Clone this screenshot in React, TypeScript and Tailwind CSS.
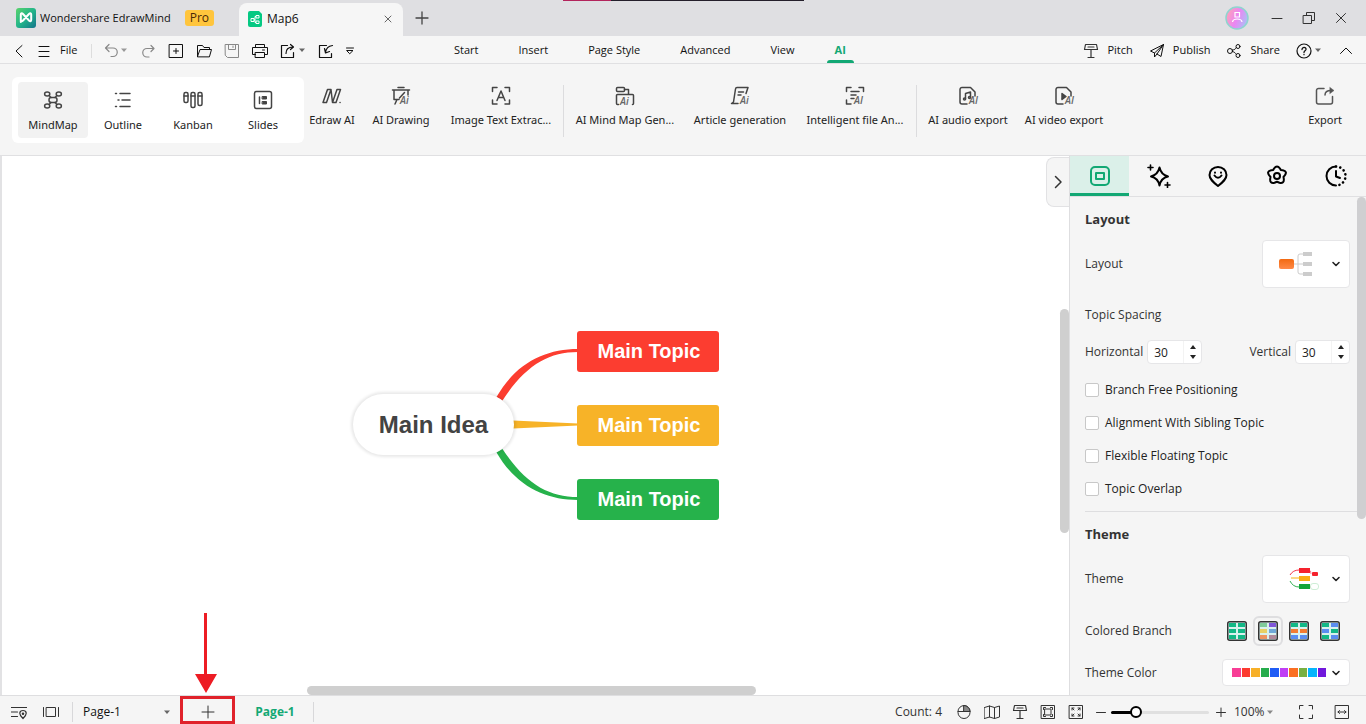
import React, { useState } from 'react';

type IconProps = {
  children: React.ReactNode;
  size?: number;
  stroke?: number;
  className?: string;
};

// every icon is drawn on a grid of its own pixel size
const Icon = ({ children, size = 16, stroke = 1, className = '' }: IconProps) => (
  <svg
    width={size}
    height={size}
    viewBox={`0 0 ${size} ${size}`}
    fill="none"
    stroke="currentColor"
    strokeWidth={stroke}
    strokeLinecap="round"
    strokeLinejoin="round"
    aria-hidden="true"
    className={`shrink-0 ${className}`}
  >
    {children}
  </svg>
);

const Caret = ({ className = 'text-[#666]' }: { className?: string }) => (
  <svg width="8" height="5" viewBox="0 0 8 5" aria-hidden="true" className={`shrink-0 ${className}`}>
    <path d="M1 0.500h6L4 4z" fill="currentColor" />
  </svg>
);

const AiMark = ({ x, y, label = 'Ai' }: { x: number; y: number; label?: string }) => (
  <text
    x={x}
    y={y}
    fontSize="10"
    fontStyle="italic"
    fontWeight="600"
    fontFamily="Open Sans, sans-serif"
    fill="#666"
    stroke="none"
  >
    {label}
  </text>
);

const PitchIcon = () => (
  <Icon>
    <path d="M2.500 1.500h11l1 5h-13zM5 4h6M8 6.500v8M5 14.500h6" stroke="#333" strokeWidth="1.200" />
  </Icon>
);

const TitleBar = () => (
  <header className="relative flex h-9 shrink-0 items-center bg-[#dfdfe2]">
    <div className="flex w-[239px] shrink-0 items-center pl-4">
      <svg width="20" height="20" viewBox="0 0 20 20" aria-hidden="true">
        <defs>
          <linearGradient id="logo" x1="0" y1="0" x2="1" y2="1">
            <stop offset="0" stopColor="#5ad36b" />
            <stop offset="0.5" stopColor="#22b58a" />
            <stop offset="1" stopColor="#14748c" />
          </linearGradient>
        </defs>
        <rect width="20" height="20" rx="3" fill="url(#logo)" />
        <path d="M4.800 14V6.500C4.800 5 6 5 7 6l6 6.500c1 1 2.200 1 2.200-.5V6.500C15.200 5 14 5 13 6l-6 6.500c-1 1-2.200 1-2.200-.500z" fill="none" stroke="#fff" strokeWidth="2" strokeLinejoin="round" />
      </svg>
      <span className="ml-1 text-[11px]">Wondershare EdrawMind</span>
      <span className="ml-3.5 flex h-4 items-center rounded-[3px] bg-[#ffc53d] px-[5px] text-[12px] text-[#4a2a08]">Pro</span>
    </div>
    <div className="mt-[3px] flex h-[33px] w-[164px] shrink-0 items-center rounded-t-lg bg-[#f6f6f6] pr-2.5 pb-0.5 pl-[9px]">
      <svg width="14" height="16" viewBox="0 0 14 16" aria-hidden="true">
        <path d="M2 0h9l3 3v11a2 2 0 0 1-2 2H2a2 2 0 0 1-2-2V2a2 2 0 0 1 2-2z" fill="#05c983" />
        <path d="M3 7.500h3v3H3zM8 4.500h3v2.500H8zM8 10h3v2.500H8zM6 9h1M7 5.500v6M7 5.500h1M7 11.500h1" fill="none" stroke="#fff" />
      </svg>
      <span className="ml-[5px] text-[12px]">Map6</span>
      <button type="button" aria-label="Close tab" className="ml-auto text-[#666]">
        <Icon size={10}><path d="M2 2l6 6M8 2l-6 6" /></Icon>
      </button>
    </div>
    <button type="button" aria-label="New tab" className="ml-3 text-[#444]">
      <Icon size={14}><path d="M7 1v12M1 7h12" strokeWidth="1.300" /></Icon>
    </button>
    <div className="mr-[17px] ml-auto flex items-center gap-4 text-[#333]">
      <button type="button" aria-label="Account" className="mr-1">
        <svg width="24" height="24" viewBox="0 0 24 24">
          <defs>
            <linearGradient id="avatar" x1="0" y1="0.300" x2="1" y2="0.700">
              <stop offset="0" stopColor="#ffa3b8" />
              <stop offset="0.500" stopColor="#ea86f3" />
              <stop offset="1" stopColor="#a6c4f6" />
            </linearGradient>
          </defs>
          <circle cx="12" cy="12" r="11" fill="url(#avatar)" stroke="#8fd4cf" strokeWidth="1.500" />
          <path d="M10 6.500h4.500v4.500H10zM7.500 16c.5-4 9-4 9.500 0" fill="none" stroke="#fff" strokeWidth="1.200" />
        </svg>
      </button>
      <button type="button" aria-label="Minimize"><Icon><path d="M3 8.500h10" /></Icon></button>
      <button type="button" aria-label="Restore">
        <Icon><path d="M2.500 5.500h8v8h-8zM5.500 5.500v-3h8v8h-3" /></Icon>
      </button>
      <button type="button" aria-label="Close window"><Icon><path d="M3.500 3.500l9 9M12.500 3.500l-9 9" /></Icon></button>
    </div>
    <div className="absolute top-0 left-[563px] flex h-px w-[241px]">
      <div className="w-12 bg-[#b3245c]" />
      <div className="flex-1 bg-[#241f2b]" />
    </div>
  </header>
);

const MENU_TABS = ['Start', 'Insert', 'Page Style', 'Advanced', 'View', 'AI'];

const MenuBar = () => {
  const [active, setActive] = useState('AI');

  return (
    <div className="flex h-7 shrink-0 items-center border-b border-[#e0e0e2] bg-[#f6f6f6] pt-0.5 text-[11px] text-[#111]">
      <div className="flex w-[434px] shrink-0 items-center pl-3">
        <button type="button" aria-label="Back"><Icon><path d="M10 2.500L4 8l6 6" /></Icon></button>
        <button type="button" className="ml-2 flex items-center gap-2">
          <Icon><path d="M3 3.500h10M3 8.500h10M3 13.500h10" /></Icon>
          File
        </button>
        <span className="mr-3 ml-3.5 h-3.5 w-px bg-[#ddd]" />
        <button type="button" aria-label="Undo" className="flex items-center text-[#888]">
          <Icon><path d="M5 1.500L1.500 5 5 8.500M1.500 5H9a4 4 0 0 1 0 8.500H7" strokeWidth="1.200" /></Icon>
          <Caret className="text-[#999]" />
        </button>
        <button type="button" aria-label="Redo" className="ml-3 text-[#888]">
          <Icon><path d="M11 2.500L14 5.500 11 8.500M14 5.500H7a4 4 0 0 0 0 8.500h2" strokeWidth="1.200" /></Icon>
        </button>
        <button type="button" aria-label="New" className="ml-3">
          <Icon><path d="M1.500 1.500h13v13h-13zM8 5.500v5M5.500 8h5" /></Icon>
        </button>
        <button type="button" aria-label="Open" className="ml-3">
          <Icon><path d="M1.500 13.500v-11h5l1.500 2h5.500v2M1.500 13.500l2.500-7h11.500l-2 7z" /></Icon>
        </button>
        <button type="button" aria-label="Save" className="ml-3 text-[#888]">
          <Icon><path d="M1.500 1.500h13v13h-11l-2-2zM4.500 1.500v5h7v-5M9 3v1.500" /></Icon>
        </button>
        <button type="button" aria-label="Print" className="ml-3">
          <Icon><path d="M3.500 4.500v-3h9v3M3.500 11.500h-3v-7h15v7h-3M3.500 9.500h9v5h-9zM10.500 7h2" /></Icon>
        </button>
        <button type="button" aria-label="Export" className="ml-3 flex items-center gap-0.5">
          <Icon><path d="M7.500 2.500h-6v12h12v-5M6 10.500c0-4 2-6.500 7-6.500M10.500 1.500L13.500 4 10.500 6.500" strokeWidth="1.200" /></Icon>
          <Caret />
        </button>
        <button type="button" aria-label="Import" className="ml-3">
          <Icon><path d="M8.500 2.500h-7v12h12v-4M14.500 2.500c-4 .5-6.500 3-7 7M6.500 5.500l1 4.500 4-1.500" strokeWidth="1.200" /></Icon>
        </button>
        <button type="button" aria-label="More tools" className="ml-3">
          <Icon size={8}><path d="M.5 1h7M1 3.500h6L4 6.500z" /></Icon>
        </button>
      </div>

      <nav className="flex h-full">
        {MENU_TABS.map((tab) => (
          <button
            key={tab}
            type="button"
            onClick={() => setActive(tab)}
            className={`relative h-full px-5 ${tab === active ? 'font-bold text-[#12a874]' : ''}`}
          >
            {tab}
            {tab === active && <span className="absolute inset-x-3 bottom-0 h-[3px] rounded-t-sm bg-[#12a874]" />}
          </button>
        ))}
      </nav>

      <div className="mr-3 ml-auto flex items-center">
        <button type="button" className="flex items-center gap-2"><PitchIcon />Pitch</button>
        <button type="button" className="ml-4 flex items-center gap-2">
          <Icon><path d="M14.500 1.500L1.500 8l4 2 9-8.500-2.500 12-4-2.500M5.500 10v4l2.500-3M8 11l6.500-9.500" /></Icon>
          Publish
        </button>
        <button type="button" className="ml-4 flex items-center gap-2">
          <Icon>
            <circle cx="4" cy="8" r="2.500" />
            <circle cx="12" cy="3.500" r="2" />
            <circle cx="12" cy="12.500" r="2" />
            <path d="M6.500 7c2 0 3-1 3.700-2.300M6.500 8.500c2 .5 3 1.500 3.700 2.800" />
          </Icon>
          Share
        </button>
        <button type="button" aria-label="Help" className="ml-4 flex items-center gap-0.5">
          <Icon>
            <circle cx="8" cy="8" r="7" strokeWidth="1.200" />
            <path d="M6 6.500C6 3.500 10.500 4 10 6.500 9.800 7.800 8 8 8 9.500M8 11.500v.2" strokeWidth="1.300" />
          </Icon>
          <Caret />
        </button>
        <button type="button" aria-label="Collapse ribbon" className="ml-4"><Icon><path d="M2.500 10.500L8 5l5.500 5.500" /></Icon></button>
      </div>
    </div>
  );
};

const VIEWS = [
  {
    name: 'MindMap',
    icon: (
      <>
        <rect x="6" y="7.500" width="8" height="5" rx="2.200" />
        <ellipse cx="4.200" cy="4" rx="2.600" ry="2" />
        <ellipse cx="15.800" cy="4" rx="2.600" ry="2" />
        <ellipse cx="4.200" cy="16" rx="2.600" ry="2" />
        <ellipse cx="15.800" cy="16" rx="2.600" ry="2" />
        <path d="M6 5.500l2 2M14 5.500l-2 2M6 14.500l2-2M14 14.500l-2-2" />
      </>
    ),
  },
  { name: 'Outline', icon: <path d="M2.500 3.500h1M7 3.500h10M5 10h1M9 10h8M2.500 16.500h1M7 16.500h10" /> },
  {
    name: 'Kanban',
    icon: (
      <>
        <rect x="1" y="2.500" width="4" height="10" rx="1.500" />
        <rect x="8" y="2.500" width="4" height="15" rx="1.500" />
        <rect x="15" y="2.500" width="4" height="13" rx="1.500" />
        <path d="M1 6h4M8 6h4M15 6h4" />
      </>
    ),
  },
  {
    name: 'Slides',
    icon: (
      <>
        <rect x="1.500" y="1.500" width="17" height="17" rx="2" />
        <path d="M6.500 7v6.500" />
        <path d="M9.500 6.500h4v2.500h-4zM9.500 11.500h4V14h-4z" fill="currentColor" strokeWidth="1" />
      </>
    ),
  },
];

const TOOL_GROUPS = [
  [
    {
      name: 'Edraw AI',
      width: 'w-14',
      icon: <path d="M1 16.500L5.500 3.500h3.500L4.500 16.500zM9 3.500l1.500 13M10.500 16.500L15 3.500h3.500L14 16.500zM18 16.500h.1" />,
    },
    {
      name: 'AI Drawing',
      width: 'w-[82px]',
      icon: (
        <>
          <path d="M7 1.500h6M1.500 4h17M3 4v9.500h5M17 4v5M6 13.500L4 18M13.500 6.500L8.500 12" />
          <AiMark x={9} y={18} />
        </>
      ),
    },
    {
      name: 'Image Text Extrac...',
      width: 'w-[118px]',
      icon: (
        <>
          <path d="M1.500 5.500v-4h4.500M14 1.500h4.500v4M18.500 14v4H14M6 18H1.500v-4" />
          <path d="M6 14.500L10 5l4 9.500M7.500 11.500h5" />
        </>
      ),
    },
  ],
  [
    {
      name: 'AI Mind Map Gen...',
      width: 'w-[116px]',
      icon: (
        <>
          <rect x="1.500" y="1.500" width="8" height="4" rx="1" />
          <path d="M9.500 3.500h4v5M3.500 18.500h-1a1 1 0 0 1-1-1V9.500a1 1 0 0 1 1-1h15a1 1 0 0 1 1 1v8a1 1 0 0 1-1 1" />
          <AiMark x={5} y={19} />
        </>
      ),
    },
    {
      name: 'Article generation',
      width: 'w-[114px]',
      icon: (
        <>
          <path d="M8 17.500H1.500l2-1.500L5.500 3q.2-1.500 1.500-1.500h11l-2 6M8.500 6h5M8 9h3" />
          <AiMark x={10} y={18} />
        </>
      ),
    },
    {
      name: 'Intelligent file An...',
      width: 'w-[116px]',
      icon: (
        <>
          <path d="M1.500 5.500v-4h4.500M14 1.500h4.500v4M6 18H1.500v-4M6 5.500h8M6 9h5M6 12.500h3" />
          <AiMark x={9} y={18} label="AI" />
        </>
      ),
    },
  ],
  [
    {
      name: 'AI audio export',
      width: 'w-24',
      icon: (
        <>
          <path d="M9 18H4a2 2 0 0 1-2-2V3.500a2 2 0 0 1 2-2h8.500L17 6v4" />
          <path d="M7.500 13V7.500l5-1.500v5" />
          <circle cx="6.500" cy="13" r="1" />
          <circle cx="11.500" cy="11.500" r="1" />
          <AiMark x={11} y={18} label="AI" />
        </>
      ),
    },
    {
      name: 'AI video export',
      width: 'w-24',
      icon: (
        <>
          <path d="M9 18H4a2 2 0 0 1-2-2V3.500a2 2 0 0 1 2-2h8.500L17 6v4" />
          <path d="M8 7.500l4 3-4 3z" fill="currentColor" />
          <AiMark x={11} y={18} label="AI" />
        </>
      ),
    },
  ],
];

const Ribbon = () => (
  <div className="flex h-[92px] shrink-0 items-start border-b border-[#e0e0e2] bg-[#f5f5f5] pt-[13px] pl-3 font-['Noto_Sans',sans-serif] text-[11px] text-[#222]">
    <div className="flex h-[66px] shrink-0 items-center rounded-md bg-white px-1.5">
      {VIEWS.map((view, i) => (
        <button
          key={view.name}
          type="button"
          className={`flex h-14 w-[70px] flex-col items-center gap-[7px] rounded pt-2 leading-4 ${i === 0 ? 'bg-[#f2f2f2]' : ''}`}
        >
          <Icon size={20} stroke={1.5} className="text-[#444]">{view.icon}</Icon>
          {view.name}
        </button>
      ))}
    </div>
    {TOOL_GROUPS.map((group, g) => (
      <div key={g} className="flex shrink-0">
        {g > 0 && <span className="mx-[3px] mt-2 h-[52px] w-px bg-[#dcdcde]" />}
        {group.map((tool) => (
          <button
            key={tool.name}
            type="button"
            className={`flex flex-col items-center gap-[6px] pt-[9px] leading-4 whitespace-nowrap ${tool.width}`}
          >
            <Icon size={20} stroke={1.5} className="overflow-visible text-[#444]">{tool.icon}</Icon>
            {tool.name}
          </button>
        ))}
      </div>
    ))}
    <button type="button" className="mr-6 ml-auto flex flex-col items-center gap-[6px] pt-[9px] leading-4">
      <Icon size={20} stroke={1.5} className="text-[#555]">
        <path d="M9 2.500H3.500a2 2 0 0 0-2 2V16a2 2 0 0 0 2 2h12a2 2 0 0 0 2-2v-5.500M10 9c0-3 2-4.500 6-4.500" />
        <path d="M15 1.500l4 3-4 3z" fill="currentColor" strokeWidth="0.500" />
      </Icon>
      Export
    </button>
  </div>
);

const TOPICS = [
  { color: 'bg-[#fc3d30]', text: 'Main Topic' },
  { color: 'bg-[#f7b328]', text: 'Main Topic' },
  { color: 'bg-[#26b24b]', text: 'Main Topic' },
];

const Canvas = () => (
  <main className="relative min-w-0 flex-1 overflow-hidden border-l-2 border-[#e2e2e4] bg-white font-['Liberation_Sans',Arial,sans-serif]">
    <svg width="90" height="170" viewBox="490 340 90 170" aria-hidden="true" className="absolute top-[184px] left-[488px]">
      <path d="M496.500 397C516 363 545 349 578 349v3C548 352 525 366 502.500 400.500z" fill="#fc3d30" />
      <path d="M513 420.500L578 423.500v2L513 428.500z" fill="#f7b328" />
      <path d="M496.500 452.500C516 486 545 500 578 500v-3C548 497 525 483 502.500 449z" fill="#26b24b" />
    </svg>
    <div className="absolute top-[238px] left-[351px] flex h-[61px] w-[161px] items-center justify-center rounded-full bg-white text-[24px] font-bold text-[#434343] shadow-[0_0_3px_2px_rgba(0,0,0,0.09)]">
      Main Idea
    </div>
    <div className="absolute top-[175px] left-[575px] flex flex-col gap-[33px] text-[20px] font-bold text-white">
      {TOPICS.map((topic) => (
        <div key={topic.color} className={`flex h-[41px] w-[142px] items-center justify-center rounded-[3px] pb-0.5 pl-0.5 ${topic.color}`}>
          {topic.text}
        </div>
      ))}
    </div>

    <button type="button" aria-label="Collapse panel" className="absolute top-px right-0 flex h-[50px] w-[23px] items-center justify-center rounded-l-lg border border-r-0 border-[#e2e2e4] bg-[#f5f5f5] text-[#333]">
      <Icon><path d="M5.500 2.500L11 8 5.500 13.500" strokeWidth="1.500" /></Icon>
    </button>
    <div className="absolute top-[153px] right-0 h-[224px] w-[9px] rounded-full bg-[#cfcfcf]" />
    <div className="absolute bottom-0 left-[305px] h-[9px] w-[449px] rounded-full bg-[#cfcfcf]" />
    <svg width="22" height="80" viewBox="0 0 22 80" aria-hidden="true" className="absolute bottom-0.5 left-[193px]">
      <path d="M9 0h3v61h10L11 80 0 61h9z" fill="#ed1c24" />
    </svg>
  </main>
);

const PANEL_TABS = [
  {
    name: 'Layout',
    icon: (
      <>
        <rect x="3" y="3" width="18" height="18" rx="4" />
        <rect x="8" y="9" width="8" height="6" />
      </>
    ),
  },
  {
    name: 'Style',
    icon: (
      <>
        <path d="M12.500 3.500q1.500 7 8.500 9-7 1.500-8.500 9-1.500-7.500-8.500-9 7-2 8.500-9z" />
        <path d="M3.500 1v5M1 3.500h5M20.500 18.500v5M18 21h5" strokeWidth="1.600" />
      </>
    ),
  },
  {
    name: 'Marker',
    icon: (
      <>
        <path d="M12 22C7 18 3.500 15 3.500 11a8.500 8 0 0 1 17 0c0 4-3.500 7-8.500 11z" />
        <path d="M8.500 11.500q3.500 4.500 7 0M9 8.500v.2M15 8.500v.2" />
      </>
    ),
  },
  {
    name: 'Clipart',
    icon: (
      <>
        <path d="M9 4.500q3-4 6 0l.8 1.500 2 .3q5 1 2 5l-1.300 1.500.3 2q.500 5-4.300 4L12 17.800l-2.500 1q-4.800 1-4.300-4l.3-2L4.200 11.300q-3-4 2-5l2-.3z" />
        <circle cx="12" cy="12" r="3" />
      </>
    ),
  },
  {
    name: 'History',
    icon: (
      <>
        <path d="M12 2.500a9.500 9.500 0 0 0 0 19" />
        <path d="M12 7v5.500l4 1.500" />
        <path d="M12 2.500a9.500 9.500 0 0 1 0 19" strokeDasharray="0.100 4.250" strokeWidth="2.600" />
      </>
    ),
  },
];

const Chevron = () => (
  <Icon size={10} className="text-[#222]"><path d="M2 3.500l3 3 3-3" strokeWidth="1.600" /></Icon>
);

const Spinner = ({ id, label }: { id: string; label: string }) => {
  const [value, setValue] = useState(30);

  return (
    <div className="flex items-center gap-1">
      <label htmlFor={id}>{label}</label>
      <div className="flex h-6 w-[55px] items-center rounded border border-[#e6e6e8] bg-white">
        <input
          id={id}
          type="text"
          inputMode="numeric"
          value={value}
          onChange={(e) => setValue(Number(e.target.value) || 0)}
          className="h-full w-9 border-r border-[#f3f3f3] pl-1.5 text-[#222] outline-none"
        />
        <div className="flex flex-1 flex-col items-center gap-[6px] text-[#222]">
          <button type="button" aria-label={`Increase ${label}`} onClick={() => setValue(value + 1)}>
            <svg width="6" height="4" viewBox="0 0 6 4" className="block"><path d="M0 4h6L3 0z" fill="currentColor" /></svg>
          </button>
          <button type="button" aria-label={`Decrease ${label}`} onClick={() => setValue(value - 1)}>
            <svg width="6" height="4" viewBox="0 0 6 4" className="block"><path d="M0 0h6L3 4z" fill="currentColor" /></svg>
          </button>
        </div>
      </div>
    </div>
  );
};

const CHECKS = ['Branch Free Positioning', 'Alignment With Sibling Topic', 'Flexible Floating Topic', 'Topic Overlap'];

// left and right cell colour of the three rows
const BRANCHES = [
  ['#12b886', '#12b886', '#12b886', '#12b886', '#12b886', '#12b886'],
  ['#7fcb9a', '#7f57d8', '#e8d064', '#6fa8d8', '#ee9560', '#b08a9c'],
  ['#12b886', '#12b886', '#f47b30', '#f47b30', '#5a8df0', '#5a8df0'],
  ['#12b886', '#5a8df0', '#5a8df0', '#12b886', '#12b886', '#5a8df0'],
];

const THEME_COLORS = ['#f83e96', '#fc3a30', '#f7b028', '#26ac4c', '#1f5cf5', '#c03ef5', '#fb6f22', '#78b042', '#05b4fc', '#7118dc'];

const SidePanel = () => {
  const [branch, setBranch] = useState(1);

  return (
    <aside className="flex w-[297px] shrink-0 flex-col border-l border-[#dedee0] bg-[#f5f5f5] text-[12px] text-[#333]">
      <div className="flex h-[41px] shrink-0 border-b border-[#e0e0e2]">
        {PANEL_TABS.map((tab, i) => (
          <button
            key={tab.name}
            type="button"
            aria-label={tab.name}
            className={`flex flex-1 items-center justify-center border-b-[3px] pt-0.5 ${
              i === 0 ? 'border-[#12a874] bg-[#dbf0e9] text-[#12a874]' : 'border-transparent text-black'
            }`}
          >
            <Icon size={24} stroke={2}>{tab.icon}</Icon>
          </button>
        ))}
      </div>

      <div className="flex min-h-0 flex-1">
        <div className="min-w-0 flex-1 overflow-hidden pl-[15px]">
          <div className="pr-[7px]">
            <h2 className="pt-3 text-[13px] leading-5 font-bold">Layout</h2>
            <div className="mt-[11px] flex h-12 items-center justify-between">
              <span>Layout</span>
              <button type="button" aria-label="Choose layout" className="flex h-12 w-[88px] items-center justify-between rounded border border-[#e6e6e8] bg-white pr-2 pl-4">
                <svg width="34" height="26" viewBox="0 0 34 26" aria-hidden="true">
                  <defs>
                    <linearGradient id="root-node" x1="0" y1="0" x2="0" y2="1">
                      <stop offset="0" stopColor="#f26a12" />
                      <stop offset="1" stopColor="#ff8a48" />
                    </linearGradient>
                  </defs>
                  <rect x="0" y="8" width="15" height="10" rx="2" fill="url(#root-node)" />
                  <path d="M15 13h10M25 3h-4q-2 0-2 2v16q0 2 2 2h4" fill="none" stroke="#ccc" />
                  <path d="M24 1h9v4h-9zM24 11h9v4h-9zM24 21h9v4h-9z" fill="#ccc" />
                </svg>
                <Chevron />
              </button>
            </div>
            <p className="mt-[17px] leading-5">Topic Spacing</p>
            <div className="mt-[15px] flex items-center justify-between">
              <Spinner id="spacing-h" label="Horizontal" />
              <Spinner id="spacing-v" label="Vertical" />
            </div>
            <div className="mt-4 flex flex-col gap-[13px]">
              {CHECKS.map((name) => (
                <label key={name} className="flex items-center gap-[6px] leading-5 text-[#222]">
                  <input type="checkbox" className="size-3.5 appearance-none rounded-[2px] border border-[#c8c8c8] bg-white checked:bg-[#12a874]" />
                  {name}
                </label>
              ))}
            </div>
          </div>
          <hr className="mt-3 border-[#dedee0]" />
          <div className="pr-[7px]">
            <h2 className="pt-3 text-[13px] leading-5 font-bold">Theme</h2>
            <div className="mt-[11px] flex h-12 items-center justify-between">
              <span>Theme</span>
              <button type="button" aria-label="Choose theme" className="flex h-12 w-[88px] items-center justify-between rounded border border-[#e6e6e8] bg-white pr-2 pl-[26px]">
                <svg width="30" height="24" viewBox="0 0 30 24" aria-hidden="true">
                  <path d="M1 8Q4 3 10 3" fill="none" stroke="#f4364c" />
                  <path d="M2 11h8" stroke="#f7b010" />
                  <path d="M1 14q3 6 9 6" fill="none" stroke="#30b050" />
                  <path d="M20 3q2 0 2 4M20 20h4" fill="none" stroke="#f4364c" strokeWidth="0.600" />
                  <rect x="10" y="1" width="11" height="5" fill="#f5222d" />
                  <rect x="10" y="9" width="11" height="5" fill="#faad14" />
                  <rect x="10" y="17" width="11" height="5" fill="#13a538" />
                  <rect x="23" y="5" width="6" height="4" rx="1" fill="#f5222d" />
                  <rect x="21.500" y="16.500" width="8" height="6" rx="2.500" fill="#fff" stroke="#b9e6c4" strokeWidth="0.700" />
                </svg>
                <Chevron />
              </button>
            </div>
            <div className="mt-3 flex h-8 items-center justify-between">
              <span>Colored Branch</span>
              <div className="mr-[5px] flex gap-px">
                {BRANCHES.map((cells, i) => (
                  <button
                    key={i}
                    type="button"
                    aria-label={`Branch colouring ${i + 1}`}
                    onClick={() => setBranch(i)}
                    className={`flex size-[30px] items-center justify-center rounded-md border-2 ${i === branch ? 'border-[#dedee0]' : 'border-transparent'}`}
                  >
                    <svg width="20" height="20" viewBox="0 0 20 20" className="shrink-0">
                      <rect x="0.750" y="0.750" width="18.500" height="18.500" rx="2" fill="#d9f1ee" stroke="#333" strokeWidth="1.500" />
                      {cells.map((color, n) => (
                        <rect key={n} x={n % 2 ? 11 : 2} y={2 + Math.floor(n / 2) * 6} width="7" height="4" fill={color} />
                      ))}
                    </svg>
                  </button>
                ))}
              </div>
            </div>
            <div className="mt-3 flex h-[27px] items-center justify-between">
              <span>Theme Color</span>
              <button type="button" aria-label="Choose theme colour" className="flex h-[27px] w-32 items-center justify-between rounded border border-[#e6e6e8] bg-white pr-2 pl-[9px]">
                <span className="flex w-[94px] gap-px">
                  {THEME_COLORS.map((color) => (
                    <span key={color} className="h-[9px] flex-1" style={{ backgroundColor: color }} />
                  ))}
                </span>
                <Chevron />
              </button>
            </div>
          </div>
        </div>
        <div className="w-[9px] shrink-0">
          <div className="h-[322px] rounded-full bg-[#cfcfd1]" />
        </div>
      </div>
    </aside>
  );
};

const StatusBar = () => {
  const [zoom, setZoom] = useState(22);

  return (
    <footer className="flex h-[29px] shrink-0 items-center border-t border-[#dedee0] bg-[#f5f5f5] pt-1 text-[12px] text-[#333]">
      <button type="button" aria-label="Outline search" className="ml-[11px]">
        <Icon stroke={1.2}><path d="M.5 3.500h15M.5 8h6M.5 12.500h6M12 14.500c-5-4.500-3.500-8 0-8s5 3.500 0 8z" /><circle cx="12" cy="9.800" r="0.700" /></Icon>
      </button>
      <button type="button" aria-label="Presentation" className="ml-4">
        <Icon><path d="M.5 3.500v9M15.500 3.500v9M3.500 3.500h9v9h-9z" /></Icon>
      </button>
      <div className="ml-[13px] flex h-5 w-[108px] items-center border-l border-[#d8d8da] pl-2.5">
        <select aria-label="Page" className="w-20 appearance-none text-[#111] outline-none">
          <option>Page-1</option>
        </select>
        <Caret />
      </div>
      <button type="button" aria-label="Add page" className="-mt-1 flex h-7 w-[55px] items-center justify-center border-[3px] border-[#e0222b] pt-1 text-[#333]">
        <Icon size={14}><path d="M7 1v12M1 7h12" /></Icon>
      </button>
      <button type="button" className="h-5 w-[79px] border-r border-[#d8d8da] pl-0.5 font-bold text-[#12a874]">Page-1</button>

      <div className="mr-4 ml-auto flex items-center gap-3">
        <span>Count: 4</span>
        <button type="button" aria-label="Mouse mode" className="ml-0.5">
          <Icon><rect x="2" y="1.500" width="12" height="13" rx="6" /><path d="M8 1.500a6 6 0 0 1 6 6H8z" fill="#888" /><path d="M2 7.500h12" /></Icon>
        </button>
        <button type="button" aria-label="Map"><Icon><path d="M.5 3.500l5-1.500 5 1.500 5-1.500v11l-5 1.500-5-1.500-5 1.500zM5.500 2v11M10.500 3.500v11" /></Icon></button>
        <button type="button" aria-label="Pitch"><PitchIcon /></button>
        <button type="button" aria-label="Fit page">
          <Icon><path d="M1.500 1.500h13v13h-13zM5 5h6v6H5zM3.500 5.500v-2h2M10.500 3.500h2v2M12.500 10.500v2h-2M5.500 12.500h-2v-2" /></Icon>
        </button>
        <button type="button" aria-label="Fit window">
          <Icon><path d="M1.500 1.500h13v13h-13zM4 6V4h2M10 4h2v2M12 10v2h-2M6 12H4v-2M4 4l2 2M12 4l-2 2M12 12l-2-2M4 12l2-2" /></Icon>
        </button>
        <div className="flex items-center gap-[5px]">
          <button type="button" aria-label="Zoom out"><Icon size={10}><path d="M.5 5.500h9" /></Icon></button>
          <input
            type="range"
            aria-label="Zoom"
            value={zoom}
            onChange={(e) => setZoom(Number(e.target.value))}
            className="h-[3px] w-[98px] appearance-none rounded-full bg-[linear-gradient(to_right,#000_26%,#e0e0e0_26%)] [&::-webkit-slider-thumb]:size-3 [&::-webkit-slider-thumb]:appearance-none [&::-webkit-slider-thumb]:rounded-full [&::-webkit-slider-thumb]:border-2 [&::-webkit-slider-thumb]:border-black [&::-webkit-slider-thumb]:bg-white"
          />
          <button type="button" aria-label="Zoom in" className="ml-0.5"><Icon size={10}><path d="M.5 5.500h9M5 1v9" /></Icon></button>
        </div>
        <div className="-ml-1 flex items-center">
          <select aria-label="Zoom level" className="w-8 appearance-none outline-none">
            <option>100%</option>
          </select>
          <Caret className="text-[#888]" />
        </div>
        <button type="button" aria-label="Full screen" className="ml-3">
          <Icon><path d="M1.500 5V1.500H5M11 1.500h3.500V5M14.500 11v3.500H11M5 14.500H1.500V11" /></Icon>
        </button>
        <button type="button" aria-label="Fit width" className="ml-2">
          <Icon><path d="M1.500 1.500h13v13h-13zM4 8h8M5.500 6.500L4 8l1.500 1.500M10.500 6.500L12 8l-1.500 1.500" /></Icon>
        </button>
      </div>
    </footer>
  );
};

const App = () => (
  <div className="flex h-screen flex-col overflow-hidden bg-[#f5f5f5] font-['Open_Sans','Noto_Sans',sans-serif] text-[#111]">
    <TitleBar />
    <MenuBar />
    <Ribbon />
    <div className="flex min-h-0 flex-1">
      <Canvas />
      <SidePanel />
    </div>
    <StatusBar />
  </div>
);

export default App;
